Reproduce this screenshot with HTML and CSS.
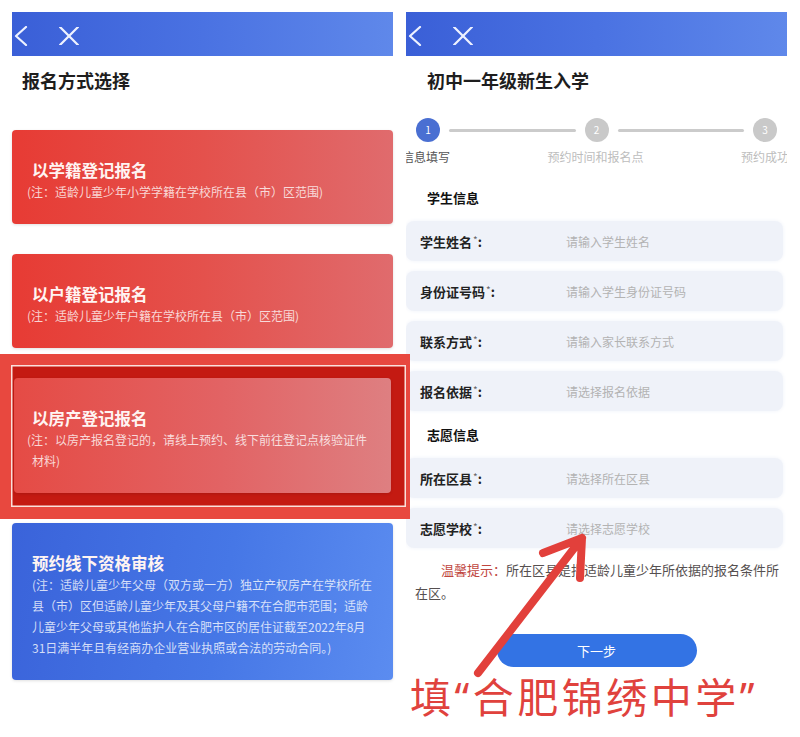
FILE: index.html
```html
<!DOCTYPE html>
<html lang="zh-CN">
<head>
    <meta charset="UTF-8">
    <meta name="viewport" content="width=device-width, initial-scale=1.0">
    <title>新生入学报名</title>
    <link rel="stylesheet" href="styles.css">
</head>
<body>

<div class="screens">

    <!-- 报名方式选择 -->
    <section class="phone">
        <header class="topbar">
            <svg class="icon-back" width="14" height="20" viewBox="0 0 14 20"><polyline points="12,1 2,10 12,19"/></svg>
            <svg class="icon-close" width="20" height="18" viewBox="0 0 20 18"><path d="M1 0 L19 18 M19 0 L1 18"/></svg>
        </header>
        <h1 class="page-title">报名方式选择</h1>

        <div class="options">
            <div class="option option--red">
                <h2 class="option-title">以学籍登记报名</h2>
                <p class="option-note">(注：适龄儿童少年小学学籍在学校所在县（市）区范围)</p>
            </div>
            <div class="option option--red">
                <h2 class="option-title">以户籍登记报名</h2>
                <p class="option-note">(注：适龄儿童少年户籍在学校所在县（市）区范围)</p>
            </div>
            <div class="picked">
                <span class="picked-frame"></span>
                <div class="option option--red option--picked">
                    <h2 class="option-title">以房产登记报名</h2>
                    <p class="option-note">(注：以房产报名登记的，请线上预约、线下前往登记点核验证件材料)</p>
                </div>
            </div>
            <div class="option option--blue">
                <h2 class="option-title">预约线下资格审核</h2>
                <p class="option-note">(注：适龄儿童少年父母（双方或一方）独立产权房产在学校所在<br>县（市）区但适龄儿童少年及其父母户籍不在合肥市范围；适龄<br>儿童少年父母或其他监护人在合肥市区的居住证截至2022年8月<br>31日满半年且有经商办企业营业执照或合法的劳动合同。)</p>
            </div>
        </div>
    </section>

    <!-- 初中一年级新生入学 -->
    <section class="phone phone--form">
        <header class="topbar">
            <svg class="icon-back" width="14" height="20" viewBox="0 0 14 20"><polyline points="12,1 2,10 12,19"/></svg>
            <svg class="icon-close" width="20" height="18" viewBox="0 0 20 18"><path d="M1 0 L19 18 M19 0 L1 18"/></svg>
        </header>
        <h1 class="page-title page-title--form">初中一年级新生入学</h1>

        <div class="steps">
            <span class="step-dot active">1</span>
            <span class="step-line"></span>
            <span class="step-dot">2</span>
            <span class="step-line"></span>
            <span class="step-dot">3</span>
        </div>
        <div class="step-labels">
            <span class="active">信息填写</span>
            <span>预约时间和报名点</span>
            <span>预约成功</span>
        </div>

        <div class="form-group form-group--first">
            <h3 class="group-title">学生信息</h3>
            <div class="field"><label>学生姓名<i>*</i>:</label><span class="placeholder">请输入学生姓名</span></div>
            <div class="field"><label>身份证号码<i>*</i>:</label><span class="placeholder">请输入学生身份证号码</span></div>
            <div class="field"><label>联系方式<i>*</i>:</label><span class="placeholder">请输入家长联系方式</span></div>
            <div class="field"><label>报名依据<i>*</i>:</label><span class="placeholder">请选择报名依据</span></div>
        </div>

        <div class="form-group">
            <h3 class="group-title">志愿信息</h3>
            <div class="field"><label>所在区县<i>*</i>:</label><span class="placeholder">请选择所在区县</span></div>
            <div class="field"><label>志愿学校<i>*</i>:</label><span class="placeholder">请选择志愿学校</span></div>
        </div>

        <p class="tip"><b>温馨提示：</b>所在区县是指适龄儿童少年所依据的报名条件所在区。</p>

        <button class="next-btn">下一步</button>
    </section>

    <!-- 标注 -->
    <svg class="callout-arrow" width="140" height="170" viewBox="0 0 140 170">
        <path d="M18 153 L122 18 M83 33 L122 18 L120 58"/>
    </svg>
    <p class="callout-text">填<span class="q">“</span>合肥锦绣中学<span class="q">”</span></p>
</div>

</body>
</html>
```

FILE: styles.css
```css
body {
    margin: 0;
    background: #fff;
    font-family: "Noto Sans CJK SC", "Noto Sans", sans-serif;
    color: #222;
}
.screens {
    position: relative;
    display: flex;
    gap: 13px;
    padding: 12px 13px 0 12px;
    height: 737px;
    box-sizing: border-box;
    overflow: hidden;
}
.phone {
    width: 381px;
    flex-shrink: 0;
}
.phone--form {
    overflow: hidden;
}

/* top bar */
.topbar {
    height: 44px;
    display: flex;
    align-items: center;
    gap: 31px;
    padding: 4px 0 0 2px;
    box-sizing: border-box;
    background: linear-gradient(90deg, #3a5fd7 0%, #4a72e2 50%, #5f88ea 100%);
}
.topbar svg {
    fill: none;
    stroke: #eef2ff;
    stroke-width: 2.2;
    stroke-linecap: round;
    stroke-linejoin: round;
}
.page-title {
    margin: 12px 0 0 10px;
    font-size: 18px;
    line-height: 24px;
    font-weight: bold;
    color: #1e1e1e;
}
.page-title--form {
    margin-left: 21px;
}

/* option cards */
.options {
    margin-top: 38px;
    display: flex;
    flex-direction: column;
    gap: 30px;
}
.option {
    padding: 29px 20px 22px;
    border-radius: 4px;
    box-shadow: 0 1px 3px rgba(0, 0, 0, 0.12);
    color: #fff;
}
.option--red {
    background: linear-gradient(90deg, #e73b34 0%, #e4514c 50%, #e06b6d 100%);
}
.option--blue {
    background: linear-gradient(100deg, #3a63da 0%, #4677e6 55%, #5b8cf0 100%);
    padding-right: 10px;
}
.option-title {
    margin: 0;
    font-size: 16.5px;
    line-height: 22px;
    font-weight: bold;
    color: #fff4f2;
}
.option-note {
    margin: 0;
    font-size: 12px;
    line-height: 21px;
    color: rgba(255, 255, 255, 0.78);
}
.option--red .option-note {
    text-indent: -5px;
}

/* highlighted option */
.picked {
    position: relative;
}
.picked-frame {
    position: absolute;
    top: -24px;
    left: -12px;
    right: -17px;
    bottom: -26px;
    border-style: solid;
    border-color: #e8483f;
    border-width: 11px 4px 12px 11px;
    background: #c41a12;
    box-shadow: inset 0 0 0 1.5px #fbe1dc;
}
.option--picked {
    position: relative;
    margin: 0 2px;
    padding-left: 18px;
    background: linear-gradient(90deg, #e54b45 0%, #e26364 55%, #de7f81 100%);
}

/* steps */
.steps {
    display: flex;
    align-items: center;
    margin-top: 26px;
    padding: 0 10px;
}
.step-dot {
    width: 24px;
    height: 24px;
    border-radius: 50%;
    background: #c9c9c9;
    color: #fff;
    font-size: 10px;
    line-height: 24px;
    text-align: center;
}
.step-dot.active {
    background: #4a6fd2;
}
.step-line {
    flex: 1;
    height: 3px;
    margin: 0 9px;
    background: #cbcbcb;
    border-radius: 2px;
}
.step-labels {
    display: flex;
    justify-content: space-between;
    margin: 6px -26px 0 -28px;
}
.step-labels span {
    width: 96px;
    text-align: center;
    font-size: 12px;
    line-height: 18px;
    color: #bdbdbd;
}
.step-labels .active {
    color: #555;
}

/* form */
.form-group {
    margin-top: 14px;
    display: flex;
    flex-direction: column;
    gap: 10px;
}
.form-group--first {
    margin-top: 22px;
}
.group-title {
    margin: 0 0 3px 21px;
    font-size: 13px;
    line-height: 20px;
    font-weight: bold;
    color: #111;
}
.field {
    display: flex;
    align-items: center;
    height: 40px;
    margin-right: 4px;
    padding-left: 14px;
    border-radius: 8px;
    background: #eff2f9;
    box-shadow: 0 0 4px #eff2f9;
}
.field label {
    width: 146px;
    font-size: 13px;
    font-weight: bold;
    color: #222;
}
.field label i {
    font-style: normal;
    font-weight: normal;
    font-size: 10px;
    color: #666;
    vertical-align: 3px;
    margin-left: 1px;
}
.placeholder {
    font-size: 12px;
    color: #b3b3b3;
}
.tip {
    margin: 10px 0 0;
    padding-left: 9px;
    text-indent: 2em;
    font-size: 13px;
    line-height: 23px;
    color: #565050;
}
.tip b {
    font-weight: normal;
    color: #bf463e;
}
.next-btn {
    display: block;
    width: 200px;
    height: 33px;
    margin: 30px auto 0;
    border: none;
    border-radius: 17px;
    background: #3373e4;
    color: #fff;
    font-family: inherit;
    font-size: 13px;
}

/* red annotation drawn over the form */
.callout-arrow {
    position: absolute;
    left: 460px;
    top: 520px;
    fill: none;
    stroke: #e2403b;
    stroke-width: 8;
    stroke-linecap: round;
    stroke-linejoin: round;
}
.callout-text {
    position: absolute;
    left: 410px;
    top: 675px;
    margin: 0;
    font-size: 41px;
    line-height: 41px;
    letter-spacing: 3.5px;
    color: #e0423d;
    white-space: nowrap;
}
.callout-text .q {
    font-family: "Noto Sans", sans-serif;
}
```
